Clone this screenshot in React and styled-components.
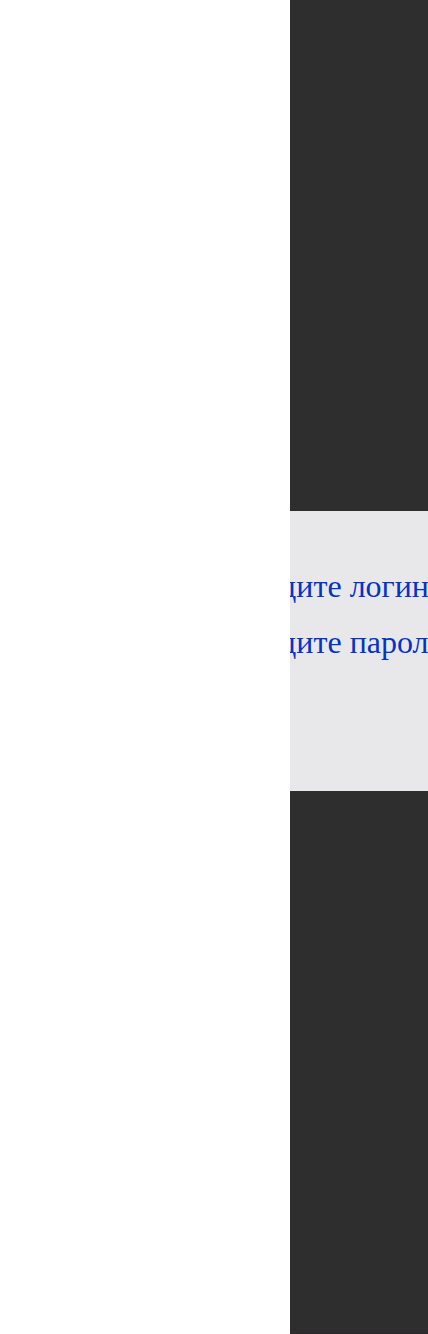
import React from "react";
import styled, { createGlobalStyle } from "styled-components";

const GlobalStyle = createGlobalStyle`
  * { box-sizing: border-box; }
  body { margin: 0; background: #2e2e2e; }
`;

const Page = styled.div`
  position: relative;
  display: flex;
  min-height: 100vh;
  overflow: hidden;
  background: #2e2e2e;
`;

const Drawer = styled.aside`
  position: absolute;
  inset: 0 auto 0 0;
  width: 290px;
  background: #ffffff;
`;

const Main = styled.main`
  flex: 1;
  min-width: 0;
  display: flex;
  flex-direction: column;
  justify-content: center;
  padding-bottom: 32px;
  border-bottom: 1px solid #2f262c;
`;

const LoginForm = styled.form`
  display: flex;
  flex-direction: column;
  min-height: 280px;
  padding: 48px 0 48px 230px;
  background: #e8e8ea;
`;

const Field = styled.input`
  width: 100%;
  height: 56px;
  padding: 0;
  border: 0;
  outline: 0;
  background: transparent;
  font: 32px "Liberation Serif", serif;
  color: #0433c8;

  &::placeholder {
    color: #0433c8;
    opacity: 1;
  }
`;

export default function App() {
  return (
    <>
      <GlobalStyle />
      <Page>
        <Main>
          <LoginForm>
            <Field type="text" name="login" placeholder="Введите логин" aria-label="Введите логин" />
            <Field type="password" name="password" placeholder="Введите пароль" aria-label="Введите пароль" />
          </LoginForm>
        </Main>
        <Drawer />
      </Page>
    </>
  );
}
